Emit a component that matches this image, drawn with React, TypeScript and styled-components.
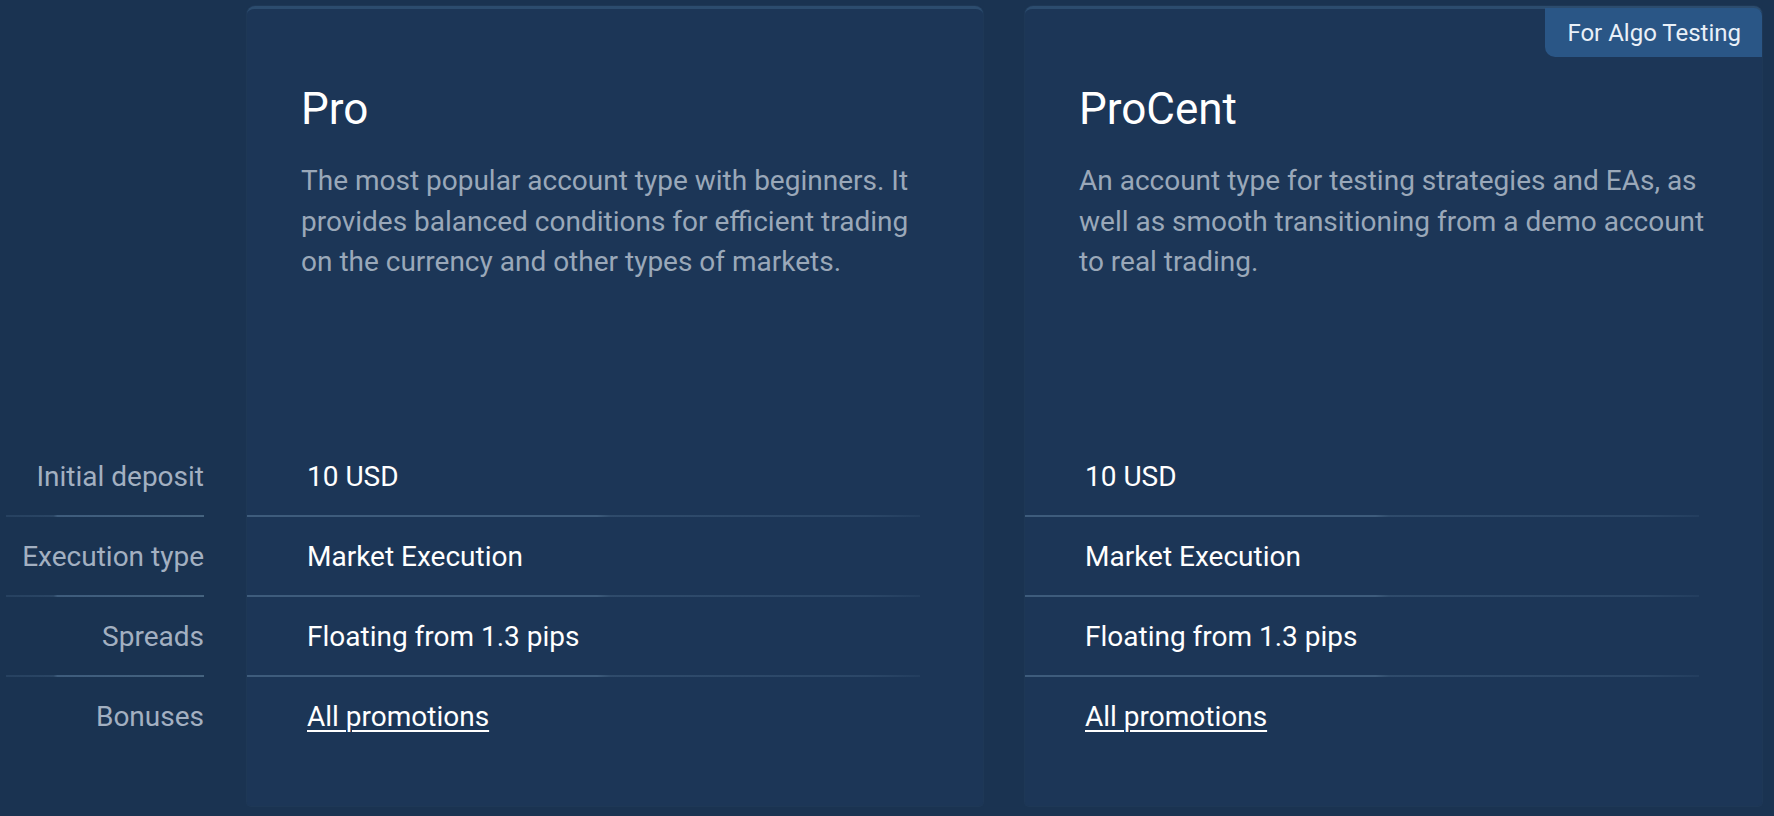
import React from "react";
import styled, { createGlobalStyle } from "styled-components";

const Global = createGlobalStyle`
  html, body { margin: 0; padding: 0; background: #1a3351; }
  body { font-family: Roboto, "Noto Sans", "Liberation Sans", sans-serif; -webkit-font-smoothing: antialiased; }
  * { box-sizing: border-box; }
`;

const Page = styled.div`
  width: 1774px;
  height: 816px;
  overflow: hidden;
  background: #1a3351;
  display: grid;
  grid-template-columns: 205px 736px 737px;
  column-gap: 42px;
  align-items: start;
  padding-top: 6px;
`;

const LabelColumn = styled.div`
  display: flex;
  flex-direction: column;
  padding-top: 430px;
`;

const Card = styled.div`
  position: relative;
  height: 800px;
  background: #1c3657;
  border-top: 3px solid #2c4c6e;
  border-radius: 8px 8px 4px 4px;
  box-shadow: 0 0 0 1px rgba(40, 66, 96, 0.35);
  display: flex;
  flex-direction: column;
`;

const Header = styled.div`
  height: 427px;
  padding: 75px 48px 0 54px;
`;

const Title = styled.h2`
  margin: 0;
  font-size: 44px;
  line-height: 50px;
  font-weight: 400;
  color: #ffffff;
`;

const Description = styled.p`
  margin: 27px 0 0 0;
  font-size: 28px;
  line-height: 40.5px;
  color: #9aa8b9;
`;

const Badge = styled.div`
  position: absolute;
  top: -1px;
  right: 0;
  height: 49px;
  padding: 0 21px 0 22px;
  display: flex;
  align-items: center;
  background: #2a5686;
  color: #e9f0f8;
  font-size: 24px;
  border-radius: 0 8px 0 10px;
`;

const Row = styled.div<{ $label?: boolean; $first?: boolean }>`
  position: relative;
  height: 80px;
  display: flex;
  align-items: center;
  justify-content: ${(p) => (p.$label ? "flex-end" : "flex-start")};
  padding-left: ${(p) => (p.$label ? "0" : "60px")};
  padding-right: ${(p) => (p.$label ? "1px" : "0")};
  font-size: 28px;
  color: ${(p) => (p.$label ? "#a3b0c1" : "#ffffff")};
  ${(p) =>
    p.$first
      ? ""
      : p.$label
      ? `&::before {
          content: "";
          position: absolute;
          top: -1px;
          left: 6px;
          right: 1px;
          height: 2px;
          background: linear-gradient(90deg, rgba(62,92,124,0.35) 0%, rgba(62,92,124,0.45) 24%, #3e5c7c 26%, #45637f 100%);
        }`
      : `&::before {
          content: "";
          position: absolute;
          top: -1px;
          left: 0;
          right: 63px;
          height: 2px;
          background: linear-gradient(90deg, #3e5c7c 0%, #3e5c7c 52%, rgba(62,92,124,0.55) 54%, rgba(62,92,124,0.45) 92%, rgba(62,92,124,0.2) 100%);
        }`}
`;

const Link = styled.a`
  color: #ffffff;
  text-decoration: underline;
  text-underline-offset: 4px;
  text-decoration-thickness: 2px;
`;

const labels = ["Initial deposit", "Execution type", "Spreads", "Bonuses"];

type Plan = {
  name: string;
  desc: string;
  badge?: string;
};

const plans: Plan[] = [
  {
    name: "Pro",
    desc: "The most popular account type with beginners. It provides balanced conditions for efficient trading on the currency and other types of markets.",
  },
  {
    name: "ProCent",
    desc: "An account type for testing strategies and EAs, as well as smooth transitioning from a demo account to real trading.",
    badge: "For Algo Testing",
  },
];

export default function App() {
  return (
    <>
      <Global />
      <Page>
        <LabelColumn>
          {labels.map((l, i) => (
            <Row key={l} $label $first={i === 0}>
              {l}
            </Row>
          ))}
        </LabelColumn>
        {plans.map((p) => (
          <Card key={p.name}>
            {p.badge && <Badge>{p.badge}</Badge>}
            <Header>
              <Title>{p.name}</Title>
              <Description>{p.desc}</Description>
            </Header>
            <Row $first>10 USD</Row>
            <Row>Market Execution</Row>
            <Row>Floating from 1.3 pips</Row>
            <Row>
              <Link href="#">All promotions</Link>
            </Row>
          </Card>
        ))}
      </Page>
    </>
  );
}
